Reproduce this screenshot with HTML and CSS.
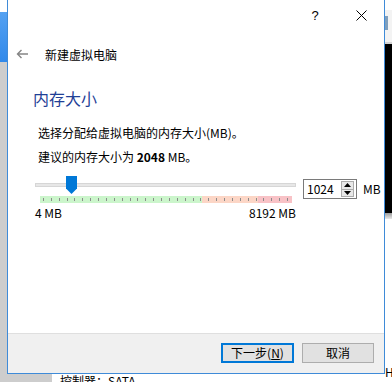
FILE: index.html
```html
<!DOCTYPE html>
<html lang="zh-CN">
  <head>
    <meta charset="UTF-8" />
    <title>新建虚拟电脑</title>
    <link rel="stylesheet" href="styles.css">
  </head>
  <body>
    <div class="desktop">
      <!-- 背后的主窗口 -->
      <div class="side-left">
        <div class="blank"></div>
        <div class="sel"></div>
        <div class="rest"></div>
      </div>
      <div class="side-right">
        <div class="blank"></div>
        <div class="toolbar"><span class="grip"></span></div>
        <div class="preview"></div>
        <div class="fade"></div>
        <div class="plain"><span class="hv">Hv</span></div>
      </div>
      <div class="behind">控制器：SATA</div>

      <!-- 向导对话框 -->
      <div class="dialog">
        <div class="titlebar">
          <span class="tb-btn help">?</span>
          <span class="tb-btn">
            <svg width="11" height="11" viewBox="0 0 11 11"><path d="M0.5 0.5 L10.5 10.5 M10.5 0.5 L0.5 10.5" stroke="#000" stroke-width="1" fill="none"/></svg>
          </span>
        </div>
        <div class="header">
          <svg class="back" width="12" height="10" viewBox="0 0 12 10"><path d="M12 5 H1.5 M5.5 1 L1.5 5 L5.5 9" stroke="#858585" stroke-width="1.4" fill="none"/></svg>
          <span class="wiz-title">新建虚拟电脑</span>
        </div>
        <div class="content">
          <div class="heading">内存大小</div>
          <p class="line first">选择分配给虚拟电脑的内存大小(MB)。</p>
          <p class="line">建议的内存大小为 <b>2048</b> MB。</p>
          <div class="slider-row">
            <div class="slider">
              <div class="track-wrap">
                <div class="track"></div>
                <svg class="thumb" width="11" height="18" viewBox="0 0 11 18"><path d="M0 0 H11 V12.5 L5.5 18 L0 12.5 Z" fill="#0078d7"/></svg>
              </div>
              <div class="ticks"></div>
              <div class="scale">
                <span>4 MB</span>
                <span>8192 MB</span>
              </div>
            </div>
            <div class="spin">
              <span class="spin-val">1024</span>
              <span class="spin-btns">
                <span class="arrow up"><svg width="7" height="4" viewBox="0 0 7 4"><path d="M0 4 L3.5 0 L7 4 Z" fill="#000"/></svg></span>
                <span class="arrow"><svg width="7" height="4" viewBox="0 0 7 4"><path d="M0 0 L3.5 4 L7 0 Z" fill="#000"/></svg></span>
              </span>
            </div>
            <span class="unit">MB</span>
          </div>
        </div>
        <div class="footer">
          <span class="btn primary">下一步(<u>N</u>)</span>
          <span class="btn">取消</span>
        </div>
      </div>
    </div>
  </body>
</html>
```

FILE: styles.css
```css
body {
  margin: 0;
  font-family: "Noto Sans CJK SC", "Liberation Sans", sans-serif;
  font-size: 12px;
  color: #000;
}
.desktop {
  position: relative;
  width: 392px;
  height: 382px;
  overflow: hidden;
  background: #fff;
}
.side-left {
  position: absolute;
  left: 0;
  top: 0;
  width: 52px;
  height: 382px;
  display: flex;
  flex-direction: column;
}
.side-left .blank {
  height: 12px;
  background: #fff;
}
.side-left .sel {
  height: 50px;
  background: linear-gradient(#55a2f2, #3089ea);
}
.side-left .rest {
  flex: 1;
  background: #cdcdcd;
}
.side-right {
  position: absolute;
  left: 385px;
  top: 0;
  width: 7px;
  height: 382px;
  display: flex;
  flex-direction: column;
}
.side-right .blank {
  height: 10px;
  background: #fff;
}
.side-right .toolbar {
  height: 32px;
  background: #f3f3f3;
  border-bottom: 2px solid #d4d4d4;
}
.side-right .grip {
  display: block;
  width: 3px;
  height: 14px;
  margin-top: 6px;
  background: #7f9fbd;
}
.side-right .preview {
  height: 169px;
  background: #000;
}
.side-right .fade {
  height: 6px;
  background: linear-gradient(#9a9a9a, #e8e8e8);
}
.side-right .plain {
  flex: 1;
  background: #fff;
  position: relative;
}
.side-right .hv {
  position: absolute;
  left: 0;
  top: 146px;
  font-size: 12px;
  line-height: 14px;
}
.behind {
  position: absolute;
  left: 60px;
  top: 374px;
  line-height: 14px;
  white-space: nowrap;
}
.dialog {
  position: absolute;
  left: 7px;
  top: -1px;
  width: 378px;
  height: 375px;
  box-sizing: border-box;
  border: 1px solid #3f8bd8;
  background: #fff;
  display: flex;
  flex-direction: column;
}
.titlebar {
  height: 30px;
  display: flex;
  justify-content: flex-end;
}
.tb-btn {
  width: 46px;
  height: 30px;
  display: flex;
  align-items: center;
  justify-content: center;
}
.help {
  font-family: "Liberation Sans", sans-serif;
  font-size: 13px;
}
.header {
  margin-top: 12px;
  height: 24px;
  padding-left: 8px;
  display: flex;
  align-items: center;
  gap: 17px;
}
.wiz-title {
  font-size: 12px;
  color: #000;
}
.content {
  padding-left: 25px;
}
.heading {
  margin-top: 22px;
  font-size: 16px;
  line-height: 20px;
  color: #1f4096;
}
.line {
  margin: 4px 0 0 5px;
  line-height: 20px;
}
.line.first {
  margin-top: 15px;
}
.slider-row {
  margin: 7px 0 0 2px;
  display: flex;
  align-items: flex-start;
}
.slider {
  width: 261px;
}
.track-wrap {
  position: relative;
  height: 20px;
  padding-top: 9px;
  box-sizing: border-box;
}
.track {
  height: 4px;
  box-sizing: border-box;
  border: 1px solid #d6d6d6;
  background: #e7e7e7;
}
.thumb {
  position: absolute;
  left: 31px;
  top: 2px;
}
.ticks {
  margin: 2px 0 0 5px;
  width: 252px;
  height: 7px;
  background:
    repeating-linear-gradient(to right, transparent 0 3px, #8c8c8c 3px 4px, transparent 4px 7.875px) 0 2px / 100% 3px no-repeat,
    linear-gradient(to right, #cbf5cb 0 64.3%, #fcd6c6 64.3% 86.5%, #f8c2c6 86.5% 100%);
}
.scale {
  margin-top: 3px;
  line-height: 14px;
  display: flex;
  justify-content: space-between;
}
.spin {
  margin: 5px 0 0 7px;
  width: 54px;
  height: 20px;
  box-sizing: border-box;
  border: 1px solid #7a7a7a;
  display: flex;
  align-items: center;
  justify-content: space-between;
  padding: 0 2px 0 3px;
}
.spin-val {
  line-height: 18px;
}
.spin-btns {
  display: flex;
  flex-direction: column;
  width: 13px;
  height: 16px;
  box-sizing: border-box;
  border: 1px solid #acacac;
  background: #e8e8e8;
}
.arrow {
  flex: 1;
  display: flex;
  align-items: center;
  justify-content: center;
}
.arrow.up {
  border-bottom: 1px solid #acacac;
}
.unit {
  margin: 5px 0 0 6px;
  line-height: 20px;
}
.footer {
  margin-top: auto;
  height: 40px;
  box-sizing: border-box;
  border-top: 1px solid #dfdfdf;
  background: #f0f0f0;
  display: flex;
  justify-content: flex-end;
  align-items: flex-start;
  gap: 8px;
  padding: 9px 10px 0 0;
}
.btn {
  width: 72px;
  height: 20px;
  box-sizing: border-box;
  border: 1px solid #adadad;
  background: #e1e1e1;
  display: flex;
  align-items: center;
  justify-content: center;
  line-height: 16px;
}
.btn.primary {
  width: 73px;
  border: 2px solid #0078d7;
}
```
